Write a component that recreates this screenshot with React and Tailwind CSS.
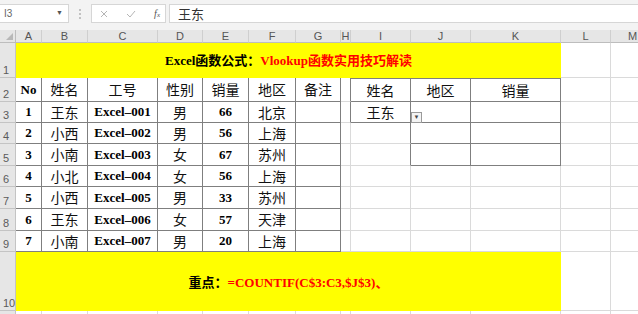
import React from 'react';

const LIGHT = 'border-r border-b border-[#dadada]';
const DARK = 'border-r border-b border-[#7f7f7f]';
const SERIF = "font-['Liberation_Serif','Noto_Sans_CJK_SC',serif]";

const data = [
  ['1', '王东', 'Excel–001', '男', '66', '北京'],
  ['2', '小西', 'Excel–002', '男', '56', '上海'],
  ['3', '小南', 'Excel–003', '女', '67', '苏州'],
  ['4', '小北', 'Excel–004', '女', '56', '上海'],
  ['5', '小西', 'Excel–005', '男', '33', '苏州'],
  ['6', '王东', 'Excel–006', '女', '57', '天津'],
  ['7', '小南', 'Excel–007', '男', '20', '上海'],
];

const isCJK = (s) => /[\u4e00-\u9fff]/.test(s);

const Txt = ({ v }) =>
  isCJK(v) ? (
    <span className="text-[14px] font-normal font-['Noto_Sans_CJK_SC',sans-serif] text-[#111]">{v}</span>
  ) : (
    <span className="text-[13px] font-bold">{v}</span>
  );

const RowHead = ({ n }) => (
  <div className="bg-[#e6e6e6] border-r border-b border-[#c4c4c4] flex items-end pl-[3px] pb-[1px] text-[11px] leading-none text-[#5b5b5b] font-['Liberation_Sans',sans-serif]">
    {n}
  </div>
);

const Cell = ({ cls = LIGHT, v }) => (
  <div className={`${cls} flex items-center justify-center`}>{v ? <Txt v={v} /> : null}</div>
);

const cols = ['A', 'B', 'C', 'D', 'E', 'F', 'G', 'H', 'I', 'J', 'K', 'L', 'M'];

export default function App() {
  return (
    <div className={`w-[638px] h-[314px] overflow-hidden bg-white ${SERIF}`}>
      {/* formula bar */}
      <div className="h-[30px] bg-[#f3f3f3] flex items-start pt-[4px] font-['Liberation_Sans',sans-serif]">
        <div className="w-[69px] h-[19px] bg-white border border-l-0 border-[#d6d6d6] flex items-center justify-between pl-[4px] pr-[5px]">
          <span className="text-[10px] text-[#666]">I3</span>
          <span className="text-[7px] text-[#555]">▼</span>
        </div>
        <div className="w-[22px] h-[19px] flex flex-col items-center justify-center gap-[2px]">
          <span className="w-[2px] h-[2px] bg-[#c2c2c2]" />
          <span className="w-[2px] h-[2px] bg-[#c2c2c2]" />
          <span className="w-[2px] h-[2px] bg-[#c2c2c2]" />
        </div>
        <div className="w-[75px] h-[19px] bg-white border border-[#d6d6d6] flex items-center justify-between pl-[8px] pr-[5px]">
          <svg width="8" height="8" viewBox="0 0 8 8" stroke="#b5b5b5" strokeWidth="1">
            <path d="M1 1 L7 7 M7 1 L1 7" />
          </svg>
          <svg width="10" height="8" viewBox="0 0 10 8" stroke="#b5b5b5" strokeWidth="1" fill="none">
            <path d="M1 4 L4 7 L9 1" />
          </svg>
          <span className="text-[10px] italic text-[#555] font-['Liberation_Serif',serif]">
            f<span className="text-[7px]">x</span>
          </span>
        </div>
        <div className="ml-[3px] flex-1 h-[19px] bg-white border border-r-0 border-[#d6d6d6] flex items-center pl-[8px]">
          <span className="text-[13px] text-[#333] font-['Noto_Sans_CJK_SC',sans-serif]">王东</span>
        </div>
      </div>

      <div className="grid grid-cols-[16px_26px_46px_70px_45px_46px_47px_45px_10px_60px_60px_90px_50px_44px] grid-rows-[13px_35px_24px_21px_21px_22px_21px_22px_22px_21px_59px_30px]">
        {/* column headers */}
        <div className="bg-[#e6e6e6] border-r border-b border-[#bdbdbd] relative">
          <span className="absolute right-[2px] bottom-[2px] w-0 h-0 border-l-[7px] border-l-transparent border-b-[7px] border-b-[#b8b8b8]" />
        </div>
        {cols.map((c) => (
          <div
            key={c}
            className="bg-[#e6e6e6] border-r border-b border-r-[#cfcfcf] border-b-[#bdbdbd] flex items-center justify-center text-[11px] leading-none text-[#555] font-['Liberation_Sans',sans-serif]"
          >
            {c}
          </div>
        ))}

        {/* row 1 */}
        <RowHead n="1" />
        <div className="col-span-11 bg-[#ffff00] flex items-center justify-center pt-[1px] text-[13px] font-bold">
          <span className="text-black">Excel函数公式：</span>
          <span className="text-[#ff0000]">Vlookup函数实用技巧解读</span>
        </div>
        <Cell />
        <Cell />

        {/* row 2 */}
        <RowHead n="2" />
        {['No', '姓名', '工号', '性别', '销量', '地区', '备注'].map((v, i) => (
          <Cell key={i} cls={DARK} v={v} />
        ))}
        <Cell cls="border-b border-[#dadada] border-r border-r-[#7f7f7f]" />
        <Cell cls={`${DARK} border-t`} v="姓名" />
        <Cell cls={`${DARK} border-t`} v="地区" />
        <Cell cls={`${DARK} border-t`} v="销量" />
        <Cell />
        <Cell />

        {data.map((r, ri) => (
          <React.Fragment key={ri}>
            <RowHead n={String(ri + 3)} />
            {r.map((v, i) => (
              <Cell key={i} cls={DARK} v={v} />
            ))}
            <Cell cls={DARK} />
            {ri === 0 && (
              <>
                <Cell cls="border-b border-[#dadada] border-r border-r-[#7f7f7f]" />
                <div className={`${DARK} relative flex items-center justify-center`}>
                  <Txt v="王东" />
                  <span className="absolute right-[-12px] bottom-[-1px] w-[11px] h-[11px] bg-[#f4f4f4] border border-[#9a9a9a] flex items-center justify-center text-[6px] text-[#444] z-10 font-['Liberation_Sans',sans-serif]">
                    ▼
                  </span>
                </div>
                <Cell cls={DARK} />
                <Cell cls={DARK} />
              </>
            )}
            {(ri === 1 || ri === 2) && (
              <>
                <Cell />
                <Cell cls="border-b border-[#dadada] border-r border-r-[#7f7f7f]" />
                <Cell cls={DARK} />
                <Cell cls={DARK} />
              </>
            )}
            {ri > 2 && (
              <>
                <Cell />
                <Cell />
                <Cell />
                <Cell />
              </>
            )}
            <Cell />
            <Cell />
          </React.Fragment>
        ))}

        {/* row 10 */}
        <RowHead n="10" />
        <div className="col-span-11 bg-[#ffff00] flex items-center justify-center pt-[2px] text-[13px] font-bold">
          <span className="text-black">重点：</span>
          <span className="text-[#ff0000]">=COUNTIF(C$3:C3,$J$3)、</span>
        </div>
        <Cell />
        <Cell />

        {/* row 11 */}
        <RowHead n="" />
        {cols.map((c) => (
          <Cell key={c} />
        ))}
      </div>
    </div>
  );
}
